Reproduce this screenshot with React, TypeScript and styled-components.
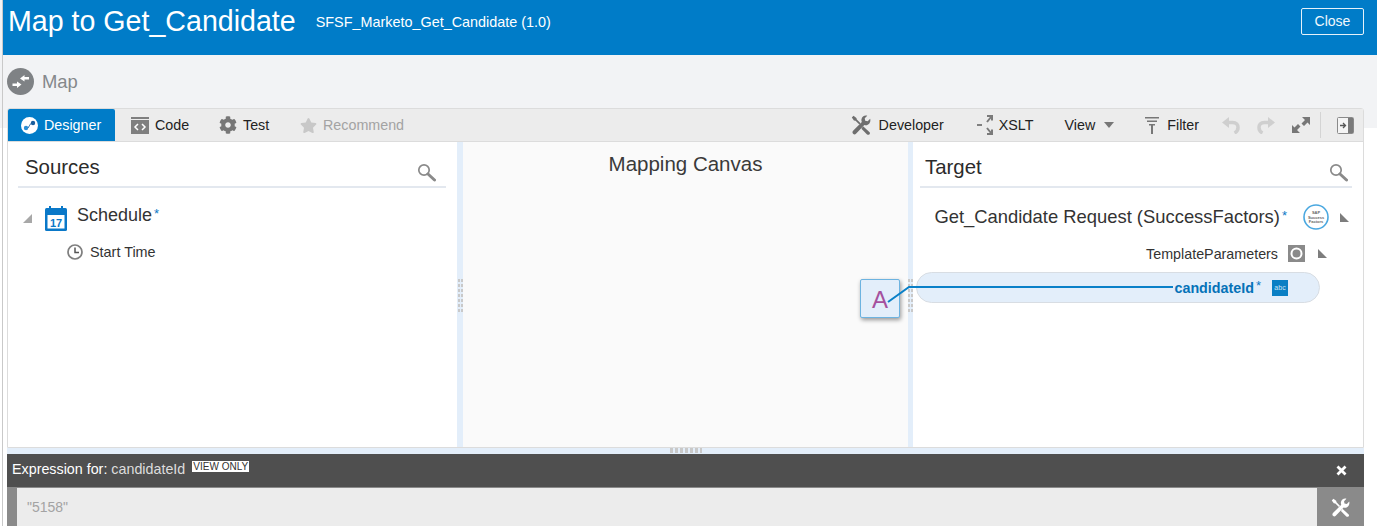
import styled, { createGlobalStyle } from 'styled-components';
import { FaCog, FaStar } from 'react-icons/fa';

const GlobalStyle = createGlobalStyle`
  html, body {
    margin: 0;
    padding: 0;
    background: #fff;
  }
  * {
    box-sizing: border-box;
  }
`;

const Page = styled.div`
  width: 1377px;
  height: 526px;
  overflow: hidden;
  padding-left: 3px;
  font-family: 'Liberation Sans', Arial, sans-serif;
  color: #333;
  background: linear-gradient(#f2f3f5 128px, #fff 128px);
  display: flex;
  flex-direction: column;
  position: relative;
`;

const LeftEdge = styled.div`
  position: absolute;
  left: 2px;
  top: 0;
  bottom: 0;
  width: 1px;
  background: #c9c9c9;
`;

const Header = styled.header`
  height: 55px;
  flex: none;
  background: #007cc8;
  color: #fff;
  display: flex;
  align-items: flex-start;
  padding: 5px 13px 0 5px;
`;

const Title = styled.h1`
  margin: 0;
  font-size: 28.6px;
  font-weight: 400;
  line-height: 33px;
`;

const SubTitle = styled.span`
  font-size: 14.4px;
  line-height: 16px;
  margin: 9px 0 0 20px;
`;

const CloseButton = styled.button`
  margin: 3px 0 0 auto;
  width: 63px;
  height: 27px;
  padding: 0 0 2px;
  background: transparent;
  border: 1px solid #e6f2fa;
  border-radius: 2px;
  color: #f2f8fc;
  font: 14px 'Liberation Sans', Arial, sans-serif;
`;

const MapBar = styled.div`
  height: 53px;
  flex: none;
  display: flex;
  align-items: center;
  gap: 8px;
  padding: 0 0 0 4px;
  color: #85888b;
  font-size: 18.4px;
`;

const Panel = styled.div`
  width: 1357px;
  height: 340px;
  flex: none;
  margin-left: 4px;
  background: #fff;
  border: 1px solid #dcdcdc;
  border-top-left-radius: 3px;
  border-top-right-radius: 3px;
  display: flex;
  flex-direction: column;
`;

const Toolbar = styled.div`
  height: 33px;
  flex: none;
  background: #ececec;
  border-bottom: 1px solid #dcdcdc;
  display: flex;
  align-items: center;
  font-size: 14.3px;
  color: #222;
`;

const Tab = styled.div<{ $width: number; $active?: boolean; $disabled?: boolean }>`
  width: ${(p) => p.$width}px;
  height: 32px;
  display: flex;
  align-items: center;
  gap: 6px;
  padding-left: ${(p) => (p.$active ? 13 : 16)}px;
  background: ${(p) => (p.$active ? '#007cc8' : 'transparent')};
  border-radius: ${(p) => (p.$active ? '2px 2px 0 0' : '0')};
  color: ${(p) => (p.$active ? '#fff' : p.$disabled ? '#a3a3a3' : '#222')};
`;

const ToolGroup = styled.div`
  margin-left: auto;
  display: flex;
  align-items: center;
  height: 32px;
  padding-right: 9px;
`;

const ToolItem = styled.div<{ $gap?: number; $left: number }>`
  display: flex;
  align-items: center;
  gap: ${(p) => p.$gap ?? 6}px;
  margin-left: ${(p) => p.$left}px;
  color: #222;
`;

const ToolDivider = styled.div`
  width: 1px;
  height: 26px;
  background: #d4d4d4;
  margin: 0 16px 0 10px;
`;

const Columns = styled.div`
  flex: 1;
  min-height: 0;
  display: grid;
  grid-template-columns: 449px 6px 445px 5px 1fr;
`;

const Side = styled.section<{ $inset: number }>`
  padding: 0 11px 0 ${(p) => p.$inset}px;
  min-width: 0;
`;

const SideHead = styled.div<{ $left: number; $right: number }>`
  height: 46px;
  border-bottom: 2px solid #e3e8ef;
  display: flex;
  align-items: center;
  justify-content: space-between;
  padding: 7px ${(p) => p.$right}px 0 ${(p) => p.$left}px;
  font-size: 20.4px;
  color: #2b2b2b;
`;

const SearchGlyph = styled.svg`
  margin-top: 10px;
`;

const Splitter = styled.div`
  background: #e3eefa;
  display: flex;
  align-items: center;
  justify-content: center;
`;

const VerticalGrip = styled.div`
  width: 5px;
  height: 33px;
  margin-top: 2px;
  background-image: linear-gradient(90deg, transparent 2px, #e3eefa 2px, #e3eefa 3px, transparent 3px),
    linear-gradient(#c9c9c9 3px, transparent 3px);
  background-size: 100% 100%, 100% 5px;
`;

const Canvas = styled.section`
  background: #fafafa;
  text-align: center;
  font-size: 20.5px;
  line-height: 24px;
  padding-top: 10px;
  color: #3a3a3a;
`;

const TreeRow = styled.div<{ $indent: number; $size: number; $top: number; $gap: number }>`
  display: flex;
  align-items: center;
  gap: ${(p) => p.$gap}px;
  margin-top: ${(p) => p.$top}px;
  padding-left: ${(p) => p.$indent}px;
  font-size: ${(p) => p.$size}px;
  color: #333;
`;

const TreeLabel = styled.span`
  margin: 0 0 6px -3px;
`;

const TargetRow = styled.div<{ $top: number; $right: number; $size: number; $gap: number }>`
  display: flex;
  align-items: center;
  justify-content: flex-end;
  gap: ${(p) => p.$gap}px;
  margin-top: ${(p) => p.$top}px;
  padding-right: ${(p) => p.$right}px;
  font-size: ${(p) => p.$size}px;
  color: #333;
`;

const RequestLabel = styled.span`
  margin-right: 5px;
`;

const Required = styled.sup`
  color: #0a7ac6;
  font-size: 13px;
  line-height: 0;
  margin-left: 2px;
  vertical-align: 3px;
  font-weight: 400;
`;

const Twisty = styled.span`
  display: flex;
  margin-left: 3px;
`;

const CandidatePill = styled.div`
  height: 31px;
  width: 404px;
  margin: 10px 0 0 -4px;
  background: #e3eefa;
  border: 1px solid #d8dde3;
  border-radius: 16px;
  display: flex;
  align-items: center;
  justify-content: flex-end;
  padding-right: 31px;
  gap: 11px;
  font-size: 14.3px;
  font-weight: 700;
  color: #0572b8;
`;

const AbcIcon = styled.span`
  width: 16px;
  height: 16px;
  background: #0a7fc4;
  color: #cfe6f5;
  font-size: 7px;
  font-weight: 400;
  display: flex;
  align-items: center;
  justify-content: center;
`;

const ExpressionBox = styled.div`
  position: absolute;
  left: 860px;
  top: 279px;
  width: 40px;
  height: 39px;
  background: #e3eefa;
  border: 1px solid #6db3e0;
  border-radius: 2px;
  box-shadow: 1px 2px 4px rgba(0, 0, 0, 0.4);
  color: #a5519e;
  font-size: 24px;
  display: flex;
  align-items: center;
  justify-content: center;
  padding-top: 3px;
`;

const Wire = styled.svg`
  position: absolute;
  left: 885px;
  top: 280px;
  pointer-events: none;
`;

const HorizontalSplitter = styled.div`
  height: 6px;
  flex: none;
  width: 1357px;
  margin-left: 4px;
  background: #e3eefa;
  display: flex;
  justify-content: center;
`;

const HorizontalGrip = styled.div`
  width: 32px;
  height: 5px;
  background-image: linear-gradient(90deg, #c9c9c9 3px, transparent 3px);
  background-size: 5px 100%;
`;

const ExpressionBar = styled.div`
  height: 33px;
  flex: none;
  width: 1357px;
  margin-left: 4px;
  background: #4f4f4f;
  color: #fff;
  display: flex;
  align-items: center;
  padding: 0 17px 3px 5px;
  font-size: 14.3px;
`;

const ExpressionName = styled.span`
  color: #ddd;
  margin-left: 4px;
`;

const ViewOnly = styled.span`
  background: #fff;
  color: #333;
  font-size: 10px;
  line-height: 11px;
  padding: 0 1px;
  margin: -5px 0 0 7px;
`;

const DismissIcon = styled.svg`
  margin: 3px 0 0 auto;
`;

const InputRow = styled.div`
  flex: 1;
  width: 1357px;
  margin-left: 4px;
  background: #8a8a8a;
  display: flex;
  padding: 1px 0 0 10px;
`;

const ExpressionInput = styled.div`
  width: 1300px;
  background: #ececec;
  color: #a3a3a3;
  font-size: 14px;
  padding: 11px 0 0 10px;
`;

const WrenchButton = styled.div`
  flex: 1;
  display: flex;
  align-items: center;
  justify-content: center;
`;

const ToolsIcon = ({ size, color }: { size: number; color: string }) => (
  <svg width={size} height={size} viewBox="0 0 24 24" fill={color}>
    <path d="M23 4.500L20 7.500L17 7L16.500 4L19.500 1C16.500 0 13 2 12.500 5.500C12.400 6.500 12.500 7.500 13 8.500L2.500 19C1.500 20 1.500 21.500 2.500 22.500C3.500 23.500 5 23.500 6 22.500L16 12C17 12.300 18 12.400 19 12.200C22 11.600 24 8 23 4.500Z" />
    <path d="M1 3L3 1L6.500 3.500L7 5.500L11.500 10L10 11.500L5.500 7L3.500 6.500Z" />
    <path d="M14.500 13.500L22 20.500C23 21.500 23 22.500 22 23.300C21 24 20 24 19 23L12.500 16.500Z" />
  </svg>
);

const SearchIcon = () => (
  <SearchGlyph width="19" height="19" viewBox="0 0 19 19" fill="none">
    <circle cx="7" cy="7" r="5.200" stroke="#8a8a8a" strokeWidth="1.700" />
    <path d="M11 11l6.500 6" stroke="#8a8a8a" strokeWidth="3" strokeLinecap="round" />
  </SearchGlyph>
);

const TriangleIcon = ({ open }: { open?: boolean }) => (
  <svg width="9" height="9" viewBox="0 0 9 9">
    <path d={open ? 'M9 0v9H0z' : 'M0 0l9 9H0z'} fill={open ? '#a8a8a8' : '#7d7d7d'} />
  </svg>
);

const MapIcon = () => (
  <svg width="27" height="27" viewBox="0 0 27 27" fill="#fff">
    <circle cx="13.500" cy="13.500" r="13.500" fill="#7f8285" />
    <path d="M13 10.500L17.500 7V9H22V11.500H17.500V13.500Z" />
    <path d="M14.500 16.500L10 13.500V15.500H5.500V18H10V20Z" />
  </svg>
);

const DesignerIcon = () => (
  <svg width="17" height="17" viewBox="0 0 17 17">
    <circle cx="8.500" cy="8.500" r="8.500" fill="#fff" />
    <path d="M5.500 11.500C8 11.500 7.500 9.500 8.500 8.500S9.500 5.500 12 5.500" stroke="#1a5f9e" strokeWidth="1" fill="none" />
    <circle cx="5" cy="11" r="2.200" fill="#2a8fd6" />
    <circle cx="12" cy="6" r="2.200" fill="#1a5f9e" />
  </svg>
);

const CodeIcon = () => (
  <svg width="18" height="17" viewBox="0 0 18 17">
    <rect x="0" y="0" width="18" height="2" fill="#7f7f7f" />
    <rect x="0" y="3" width="18" height="14" fill="#7f7f7f" />
    <path d="M7 7l-3 3 3 3M11 7l3 3-3 3" stroke="#fff" strokeWidth="1.500" fill="none" />
  </svg>
);

const XsltIcon = () => (
  <svg width="17" height="20" viewBox="0 0 17 20" fill="none">
    <path d="M0 10h5" stroke="#666" strokeWidth="1.600" />
    <path d="M10 7l4-5M10 1h5v4.500M10 13l4 5M10 19h5v-4.500" stroke="#7a7a7a" strokeWidth="2" />
  </svg>
);

const CaretIcon = () => (
  <svg width="10" height="6" viewBox="0 0 10 6">
    <path d="M0 0h10L5 6z" fill="#777" />
  </svg>
);

const FilterIcon = () => (
  <svg width="14" height="17" viewBox="0 0 14 17">
    <path d="M0 0h14v1.500H0zM2 3.500h10V5H2zM4 7h6v1.500H4zM6 8.500h2V17H6z" fill="#777" />
  </svg>
);

const UndoIcon = ({ flip }: { flip?: boolean }) => (
  <svg width="18" height="17" viewBox="0 0 18 17" fill="none">
    <g transform={flip ? 'translate(18 0) scale(-1 1)' : undefined}>
      <path d="M5 5.500H10.500C14.500 5.500 16 8 16 10.500C16 13 14.500 15 12.500 16" stroke="#cfcfcf" strokeWidth="3.500" />
      <path d="M0 5.500L7 0V11Z" fill="#cfcfcf" />
    </g>
  </svg>
);

const ExpandIcon = () => (
  <svg width="18" height="18" viewBox="0 0 18 18" fill="#777">
    <path d="M10 1h8v8l-2.500-2.500-3.500 3.500-2.500-2.500 3.500-3.500zM8 17H0V9l2.500 2.500L6 8l2.500 2.500L5 14z" />
  </svg>
);

const CollapseIcon = () => (
  <svg width="17" height="17" viewBox="0 0 17 17">
    <rect x="0.500" y="0.500" width="16" height="16" rx="1" fill="#f4f4f4" stroke="#8a8a8a" />
    <rect x="11" y="1" width="5" height="15" fill="#7a7a7a" />
    <path d="M3 8.500h5M6 6l2.500 2.500L6 11" stroke="#555" strokeWidth="1.300" fill="none" />
  </svg>
);

const CalendarIcon = () => (
  <svg width="22" height="25" viewBox="0 0 22 25">
    <rect x="0" y="2" width="22" height="23" rx="1.500" fill="#0a78c8" />
    <rect x="4" y="0" width="2" height="5" fill="#0a78c8" />
    <rect x="16" y="0" width="2" height="5" fill="#0a78c8" />
    <rect x="2.500" y="9" width="17" height="13.500" fill="#fff" />
    <text x="11" y="20.500" textAnchor="middle" fontSize="11" fontWeight="700" fill="#0a78c8" fontFamily="Liberation Sans">
      17
    </text>
  </svg>
);

const ClockIcon = () => (
  <svg width="16" height="16" viewBox="0 0 16 16" fill="none">
    <circle cx="8" cy="8" r="7" stroke="#7f7f7f" strokeWidth="1.700" />
    <path d="M8 3.500V8.500H12" stroke="#555" strokeWidth="1.500" />
  </svg>
);

const SuccessFactorsBadge = () => (
  <svg width="26" height="26" viewBox="0 0 26 26">
    <circle cx="13" cy="13" r="12" fill="#fff" stroke="#4aa8e0" strokeWidth="1.600" />
    <text x="13" y="9.500" textAnchor="middle" fontSize="4" fontWeight="700" fill="#666" fontFamily="Liberation Sans">
      SAP
    </text>
    <text x="13" y="14.500" textAnchor="middle" fontSize="4" fontWeight="700" fill="#666" fontFamily="Liberation Sans">
      Success
    </text>
    <text x="13" y="19" textAnchor="middle" fontSize="4" fontWeight="700" fill="#666" fontFamily="Liberation Sans">
      Factors
    </text>
  </svg>
);

const RingIcon = () => (
  <svg width="17" height="17" viewBox="0 0 17 17">
    <rect width="17" height="17" fill="#8a8a8a" />
    <circle cx="8.500" cy="8.500" r="5" fill="#8a8a8a" stroke="#fff" strokeWidth="2" />
  </svg>
);

export default function App() {
  return (
    <Page>
      <GlobalStyle />
      <LeftEdge />
      <Header>
        <Title>Map to Get_Candidate</Title>
        <SubTitle>SFSF_Marketo_Get_Candidate (1.0)</SubTitle>
        <CloseButton>Close</CloseButton>
      </Header>

      <MapBar>
        <MapIcon />
        Map
      </MapBar>

      <Panel>
        <Toolbar>
          <Tab $width={107} $active>
            <DesignerIcon />
            Designer
          </Tab>
          <Tab $width={88}>
            <CodeIcon />
            Code
          </Tab>
          <Tab $width={81}>
            <FaCog size={18} color="#777" />
            Test
          </Tab>
          <Tab $width={130} $disabled>
            <FaStar size={17} color="#c8c8c8" />
            Recommend
          </Tab>
          <ToolGroup>
            <ToolItem $left={0} $gap={8}>
              <ToolsIcon size={20} color="#6e6e6e" />
              Developer
            </ToolItem>
            <ToolItem $left={33} $gap={5}>
              <XsltIcon />
              XSLT
            </ToolItem>
            <ToolItem $left={31} $gap={9}>
              View
              <CaretIcon />
            </ToolItem>
            <ToolItem $left={31} $gap={8}>
              <FilterIcon />
              Filter
            </ToolItem>
            <ToolItem $left={23}>
              <UndoIcon />
            </ToolItem>
            <ToolItem $left={17}>
              <UndoIcon flip />
            </ToolItem>
            <ToolItem $left={17}>
              <ExpandIcon />
            </ToolItem>
            <ToolDivider />
            <CollapseIcon />
          </ToolGroup>
        </Toolbar>

        <Columns>
          <Side $inset={10}>
            <SideHead $left={7} $right={10}>
              Sources
              <SearchIcon />
            </SideHead>
            <TreeRow $indent={5} $size={18} $top={17} $gap={13}>
              <TriangleIcon open />
              <CalendarIcon />
              <TreeLabel>
                Schedule
                <Required>*</Required>
              </TreeLabel>
            </TreeRow>
            <TreeRow $indent={49} $size={14.4} $top={12} $gap={7}>
              <ClockIcon />
              Start Time
            </TreeRow>
          </Side>
          <Splitter>
            <VerticalGrip />
          </Splitter>
          <Canvas>Mapping Canvas</Canvas>
          <Splitter>
            <VerticalGrip />
          </Splitter>
          <Side $inset={7}>
            <SideHead $left={5} $right={4}>
              Target
              <SearchIcon />
            </SideHead>
            <TargetRow $top={16} $right={3} $size={18.4} $gap={11}>
              <RequestLabel>
                Get_Candidate Request (SuccessFactors)
                <Required>*</Required>
              </RequestLabel>
              <SuccessFactorsBadge />
              <TriangleIcon />
            </TargetRow>
            <TargetRow $top={15} $right={25} $size={14.3} $gap={10}>
              TemplateParameters
              <RingIcon />
              <Twisty>
                <TriangleIcon />
              </Twisty>
            </TargetRow>
            <CandidatePill>
              <span>
                candidateId
                <Required>*</Required>
              </span>
              <AbcIcon>abc</AbcIcon>
            </CandidatePill>
          </Side>
        </Columns>
      </Panel>

      <HorizontalSplitter>
        <HorizontalGrip />
      </HorizontalSplitter>

      <ExpressionBar>
        Expression for:
        <ExpressionName>candidateId</ExpressionName>
        <ViewOnly>VIEW ONLY</ViewOnly>
        <DismissIcon width="11" height="11" viewBox="0 0 11 11">
          <path d="M1.500 1.500l8 8M9.500 1.500l-8 8" stroke="#fff" strokeWidth="2.800" />
        </DismissIcon>
      </ExpressionBar>

      <InputRow>
        <ExpressionInput>"5158"</ExpressionInput>
        <WrenchButton>
          <ToolsIcon size={19} color="#fff" />
        </WrenchButton>
      </InputRow>

      <ExpressionBox>A</ExpressionBox>
      <Wire width="290" height="30" viewBox="0 0 290 30" fill="none">
        <path d="M3 22L24 7H288" stroke="#0a80c8" strokeWidth="2" />
      </Wire>
    </Page>
  );
}
